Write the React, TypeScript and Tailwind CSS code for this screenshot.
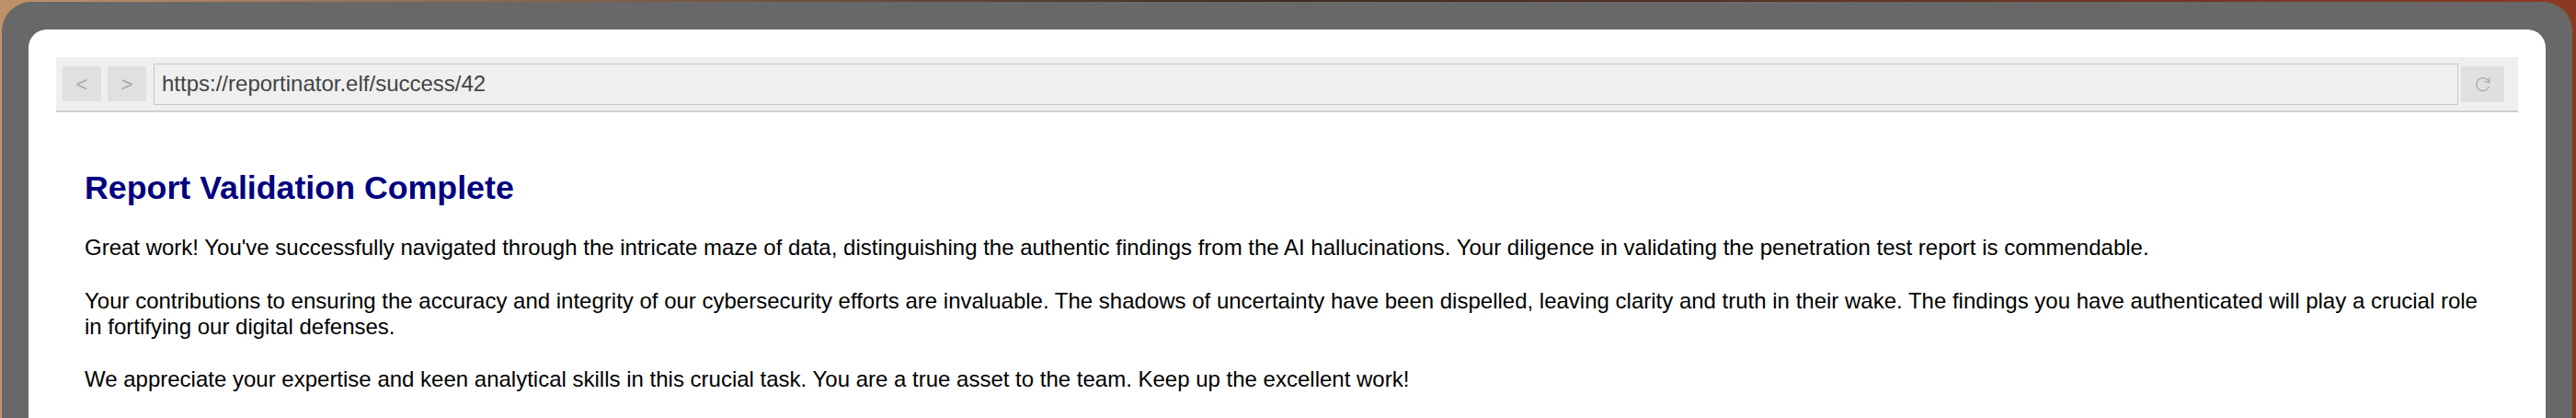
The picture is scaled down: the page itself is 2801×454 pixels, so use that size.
export default function App() {
  return (
    <div
      className="min-h-screen overflow-hidden bg-gradient-to-r from-[#c0926c] via-[#3e2c24] to-[#8b3a22] pl-[2px] pr-[4px] pt-[2px]"
      style={{ fontFamily: '"Liberation Sans", Arial, sans-serif' }}
    >
      {/* monitor bezel */}
      <div className="h-[452px] rounded-t-[32px] bg-[#686868] px-[29px] pt-[30px]">
        {/* screen */}
        <div className="h-full rounded-t-[20px] bg-white px-[30px] pt-[30px]">
          {/* browser toolbar */}
          <div className="flex h-[60px] items-center border-b-2 border-[#cfcfcf] bg-[#efefef] pl-[7px] pr-[15px]">
            <div className="flex h-[38px] w-[42px] items-center justify-center bg-[#e0e0e0] text-[22px] text-[#a8a8a8]">
              &lt;
            </div>
            <div className="ml-[7px] flex h-[38px] w-[42px] items-center justify-center bg-[#e0e0e0] text-[22px] text-[#a8a8a8]">
              &gt;
            </div>
            <div className="ml-[8px] flex h-[45px] flex-1 items-center border border-[#c8c8c8] bg-[#efefef] pl-[8px] text-[24px] text-[#444444]">
              https://reportinator.elf/success/42
            </div>
            <div className="ml-[3px] flex h-[39px] w-[47px] items-center justify-center bg-[#e0e0e0]">
              <svg width="20" height="20" viewBox="0 0 20 20" fill="none" stroke="#a8a8a8" strokeWidth="1.2">
                <path d="M16.5 8.5 A7 7 0 1 0 16.2 13.5" strokeLinecap="round" />
                <path d="M16.8 3.5 L16.6 8.6 L11.8 7.6" strokeLinecap="round" strokeLinejoin="round" />
              </svg>
            </div>
          </div>

          {/* page content */}
          <div className="px-[31px] pt-[62px] text-black">
            <h1 className="text-[35.75px] font-bold leading-[40px] text-[#000080]">Report Validation Complete</h1>
            <p className="mt-[31px] text-[24px] leading-[28px]">
              Great work! You've successfully navigated through the intricate maze of data, distinguishing the authentic
              findings from the AI hallucinations. Your diligence in validating the penetration test report is commendable.
            </p>
            <p className="mt-[30px] text-[24px] leading-[28px]">
              Your contributions to ensuring the accuracy and integrity of our cybersecurity efforts are invaluable. The
              shadows of uncertainty have been dispelled, leaving clarity and truth in their wake. The findings you have
              authenticated will play a crucial role in fortifying our digital defenses.
            </p>
            <p className="mt-[29px] text-[24px] leading-[28px]">
              We appreciate your expertise and keen analytical skills in this crucial task. You are a true asset to the
              team. Keep up the excellent work!
            </p>
          </div>
        </div>
      </div>
    </div>
  );
}
